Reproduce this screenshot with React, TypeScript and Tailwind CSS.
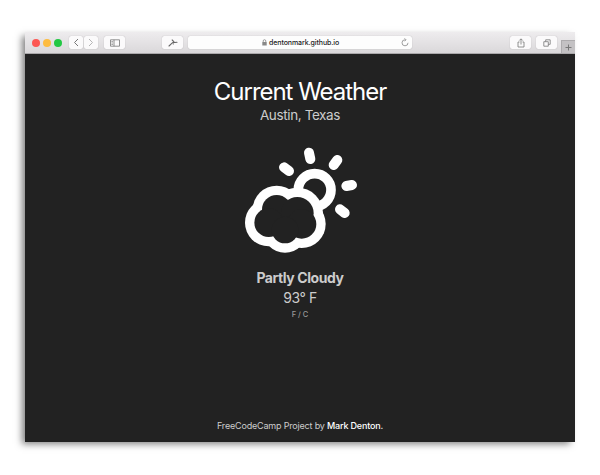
const button =
  'flex h-[13px] items-center justify-center rounded-[2px] bg-[#fbfafb] text-[#777] shadow-[0_0_1px_rgba(0,0,0,0.3)]';

function Toolbar() {
  return (
    <header className="flex h-[22px] shrink-0 border-b border-[#aaa8aa] bg-gradient-to-b from-[#eeecee] to-[#dad8da]">
      <div className="flex h-[21px] items-center pl-[7px]">
        <i className="size-[8px] rounded-full bg-[#fc5753]" />
        <i className="ml-[3px] size-[8px] rounded-full bg-[#fdbc40]" />
        <i className="ml-[3px] size-[8px] rounded-full bg-[#23c844]" />
        <span className={`${button} ml-[7px] w-[14px]`}>
          <svg width="6" height="9" viewBox="0 0 6 9" fill="none" stroke="currentColor"><path d="M5 1 1.5 4.5 5 8" /></svg>
        </span>
        <span className={`${button} ml-px w-[14px]`}>
          <svg width="6" height="9" viewBox="0 0 6 9" fill="none" stroke="#b5b5b5"><path d="M1 1 4.5 4.5 1 8" /></svg>
        </span>
        <span className={`${button} ml-[6px] w-[21px]`}>
          <svg width="10" height="8" viewBox="0 0 10 8" fill="none" stroke="currentColor" strokeWidth=".8"><path d="M.5.8h9v6.4h-9zM4 .8v6.4M1.5 2.5h1.3M1.5 4h1.3M1.5 5.5h1.3" /></svg>
        </span>
        <span className={`${button} ml-[37px] w-[21px]`}>
          <svg width="10" height="8" viewBox="0 0 10 8" fill="none" stroke="#666" strokeLinecap="round"><path d="M1 7 4.500 3.700 9 3.200M4.200 1 6 2.800" strokeWidth="1.100" /><path d="M5 3.500 5.300 5.300" strokeWidth=".7" /></svg>
        </span>
        <div className="ml-[5px] flex h-[13px] w-[224px] items-center rounded-[2px] bg-[#fdfdfd] pl-[74px] pr-[3px] text-[7px] text-[#222] shadow-[0_0_1px_rgba(0,0,0,0.3)]">
          <svg width="5" height="7" viewBox="0 0 5 7"><path d="M1.2 3V2a1.3 1.3 0 0 1 2.6 0v1" fill="none" stroke="#888" strokeWidth=".8" /><path d="M.3 3h4.4v3.5H.3z" fill="#888" /></svg>
          <span className="ml-[2px] mt-[2px] whitespace-nowrap tracking-[-0.08px] font-medium">dentonmark.github.io</span>
          <svg className="ml-auto" width="8" height="9" viewBox="0 0 8 9" fill="none" stroke="#888" strokeWidth=".8"><path d="M4.5 1.8H4A3 3 0 1 0 7 4.8M3.5.3 5 1.8 3.5 3.3" /></svg>
        </div>
      </div>
      <div className="ml-auto flex">
        <div className="flex h-[21px] items-center gap-[5px] pr-[4px]">
          <span className={`${button} w-[21px]`}>
            <svg width="8" height="10" viewBox="0 0 8 10" fill="none" stroke="currentColor" strokeWidth=".8"><path d="M2.5 4H1v5h6V4H5.500M4 6.500V1M2.300 2.500 4 .8l1.700 1.700" /></svg>
          </span>
          <span className={`${button} w-[21px]`}>
            <svg width="8" height="8" viewBox="0 0 8 8" fill="none" stroke="currentColor" strokeWidth=".8"><path d="M.8 2.700h4.500v4.500H.8zM2.700 2.700V.8h4.500v4.500H5.300" /></svg>
          </span>
        </div>
        <span className="mt-[8px] flex h-[13px] w-[14px] items-center justify-center border-l border-t border-[#adabad] bg-[#c3c1c3]">
          <svg width="7" height="7" viewBox="0 0 7 7" stroke="#777"><path d="M3.500 .5v6M.5 3.500h6" /></svg>
        </span>
      </div>
    </header>
  );
}

const lobes = [
  [125, 209, 44],
  [187, 220, 49],
  [101, 248, 43],
  [200, 252, 44],
  [150, 270, 40],
];

function PartlyCloudy() {
  return (
    <svg className="block" width="130" height="120" viewBox="0 0 390 360">
      <circle cx="239" cy="150" r="49" fill="none" stroke="#fff" strokeWidth="29" />
      <path
        d="M147 82 162 93M222 38 226 57M307 60 296 75M351 135 334 138M315 208 329 219"
        stroke="#fff"
        strokeWidth="30"
        strokeLinecap="round"
      />
      {lobes.map(([x, y, r]) => <circle key={`o${x}`} cx={x} cy={y} r={r + 28} fill="#fff" />)}
      {lobes.map(([x, y, r]) => <circle key={`i${x}`} cx={x} cy={y} r={r} fill="#222" />)}
    </svg>
  );
}

export default function App() {
  return (
    <div className="h-[475px] w-[600px] overflow-hidden bg-white pl-[25px] pt-[32px] font-['Inter','Liberation_Sans',sans-serif]">
      <div className="flex h-[410px] w-[550px] flex-col bg-[#222] shadow-[-4px_3px_7px_-1px_rgba(0,0,0,0.5)]">
        <Toolbar />
        <main className="flex flex-1 flex-col items-center text-[#ccc]">
          <h1 className="mt-[22px] whitespace-nowrap text-[24px] leading-[31px] tracking-[-1.03px] text-white">Current Weather</h1>
          <p className="-mt-px whitespace-nowrap text-[13.500px] leading-[18px] tracking-[-0.38px]">Austin, Texas</p>
          <div className="mt-[16px]"><PartlyCloudy /></div>
          <p className="mt-[8px] whitespace-nowrap text-[14px] font-bold leading-[20px] tracking-[-0.42px]">Partly Cloudy</p>
          <p className="text-[14px] leading-[20px] tracking-[-0.4px]">93° F</p>
          <p className="mt-[1px] text-[7.500px] font-medium leading-[12px] text-[#999]">F / C</p>
          <footer className="mb-[9px] mt-auto whitespace-nowrap text-[9px] leading-[14px] tracking-[-0.18px]">
            FreeCodeCamp Project by <span className="font-medium text-white">Mark Denton.</span>
          </footer>
        </main>
      </div>
    </div>
  );
}
